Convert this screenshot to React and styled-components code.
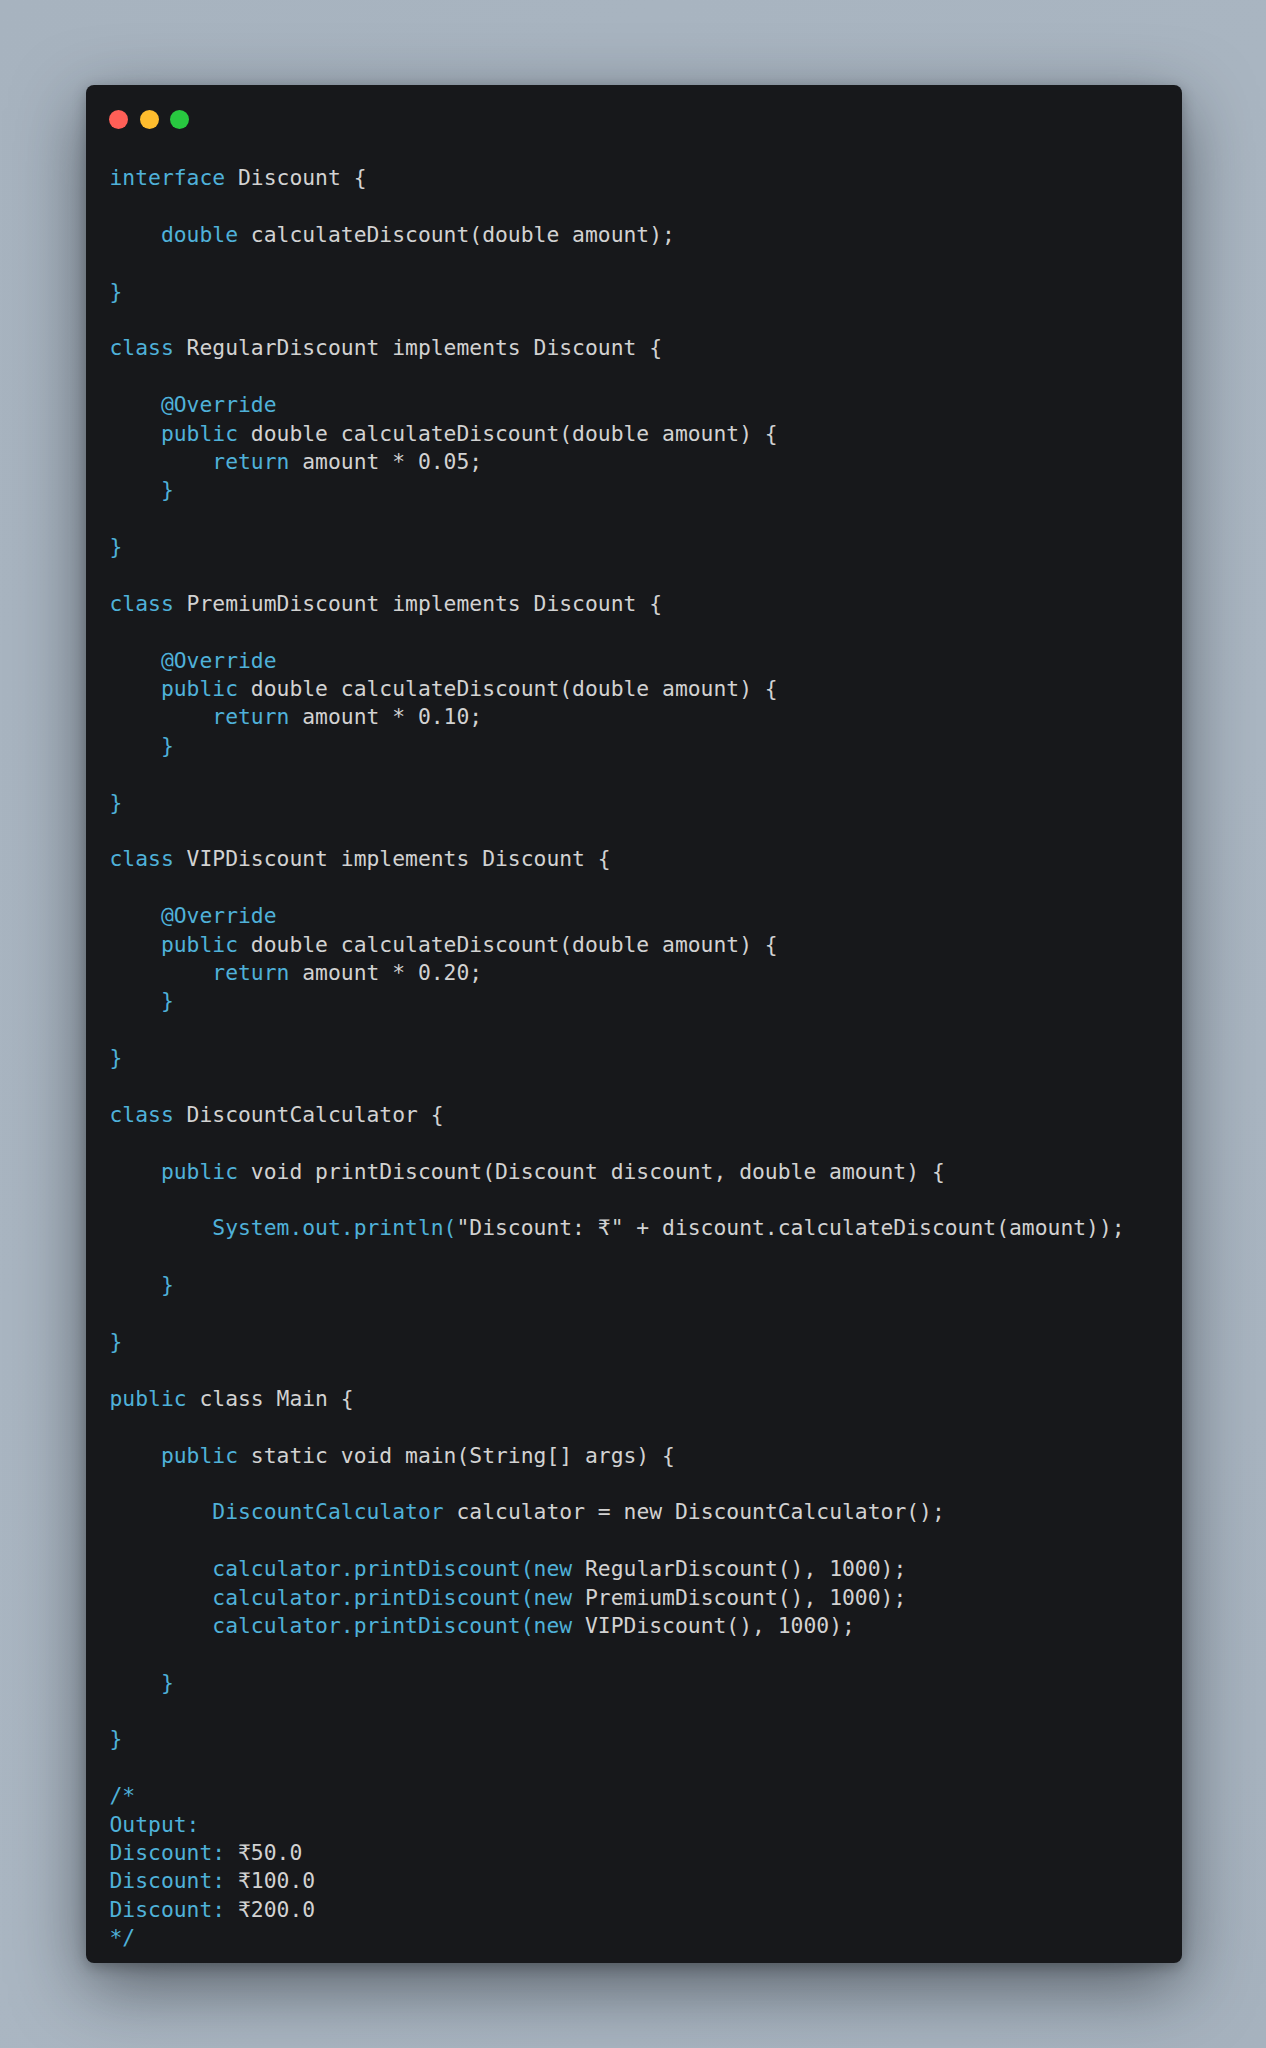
import React from "react";
import styled, { createGlobalStyle } from "styled-components";

const Global = createGlobalStyle`
  html, body { margin: 0; padding: 0; }
  body {
    background: #a9b5c1;
    min-height: 2048px;
    font-family: "DejaVu Sans Mono", "Liberation Mono", monospace;
  }
`;

const Page = styled.div`
  width: 1266px;
  min-height: 2048px;
  box-sizing: border-box;
  padding: 85px 84px 0 86px;
  background: linear-gradient(135deg, #a7b3bf 0%, #aab6c2 60%, #a6b2be 100%);
`;

const Window = styled.div`
  background: #17181b;
  border-radius: 8px;
  box-shadow: 0 22px 70px rgba(20, 24, 30, 0.55), 0 4px 14px rgba(0, 0, 0, 0.25);
  padding: 25px 20px 10px 23.5px;
  box-sizing: border-box;
`;

const Dots = styled.div`
  display: flex;
  gap: 11.6px;
  margin-left: -0.5px;
  margin-bottom: 35px;
`;

const Dot = styled.span`
  width: 19px;
  height: 19px;
  border-radius: 50%;
  background: ${(p) => p.$c};
`;

const Code = styled.div`
  font-family: "DejaVu Sans Mono", "Liberation Mono", monospace;
  font-size: 21.35px;
  line-height: 28.4px;
  color: #d2d2d2;
`;

const Line = styled.div`
  white-space: pre;
  height: 28.4px;
`;

const Tok = styled.span`
  color: ${(p) => (p.$k ? "#4fb1d9" : "#d2d2d2")};
`;

const B = (t) => [t, 1];
const W = (t) => [t, 0];

const lines = [
  [B("interface"), W(" Discount {")],
  [],
  [W("    "), B("double"), W(" calculateDiscount(double amount);")],
  [],
  [B("}")],
  [],
  [B("class"), W(" RegularDiscount implements Discount {")],
  [],
  [W("    "), B("@Override")],
  [W("    "), B("public"), W(" double calculateDiscount(double amount) {")],
  [W("        "), B("return"), W(" amount * 0.05;")],
  [W("    "), B("}")],
  [],
  [B("}")],
  [],
  [B("class"), W(" PremiumDiscount implements Discount {")],
  [],
  [W("    "), B("@Override")],
  [W("    "), B("public"), W(" double calculateDiscount(double amount) {")],
  [W("        "), B("return"), W(" amount * 0.10;")],
  [W("    "), B("}")],
  [],
  [B("}")],
  [],
  [B("class"), W(" VIPDiscount implements Discount {")],
  [],
  [W("    "), B("@Override")],
  [W("    "), B("public"), W(" double calculateDiscount(double amount) {")],
  [W("        "), B("return"), W(" amount * 0.20;")],
  [W("    "), B("}")],
  [],
  [B("}")],
  [],
  [B("class"), W(" DiscountCalculator {")],
  [],
  [W("    "), B("public"), W(" void printDiscount(Discount discount, double amount) {")],
  [],
  [W("        "), B("System.out.println("), W("\"Discount: ₹\" + discount.calculateDiscount(amount));")],
  [],
  [W("    "), B("}")],
  [],
  [B("}")],
  [],
  [B("public"), W(" class Main {")],
  [],
  [W("    "), B("public"), W(" static void main(String[] args) {")],
  [],
  [W("        "), B("DiscountCalculator"), W(" calculator = new DiscountCalculator();")],
  [],
  [W("        "), B("calculator.printDiscount(new"), W(" RegularDiscount(), 1000);")],
  [W("        "), B("calculator.printDiscount(new"), W(" PremiumDiscount(), 1000);")],
  [W("        "), B("calculator.printDiscount(new"), W(" VIPDiscount(), 1000);")],
  [],
  [W("    "), B("}")],
  [],
  [B("}")],
  [],
  [B("/*")],
  [B("Output:")],
  [B("Discount:"), W(" ₹50.0")],
  [B("Discount:"), W(" ₹100.0")],
  [B("Discount:"), W(" ₹200.0")],
  [B("*/")],
];

export default function App() {
  return (
    <>
      <Global />
      <Page>
        <Window>
          <Dots>
            <Dot $c="#ff5f57" />
            <Dot $c="#febc2e" />
            <Dot $c="#28c840" />
          </Dots>
          <Code>
            {lines.map((toks, i) => (
              <Line key={i}>
                {toks.map(([t, k], j) => (
                  <Tok key={j} $k={k}>
                    {t}
                  </Tok>
                ))}
              </Line>
            ))}
          </Code>
        </Window>
      </Page>
    </>
  );
}
